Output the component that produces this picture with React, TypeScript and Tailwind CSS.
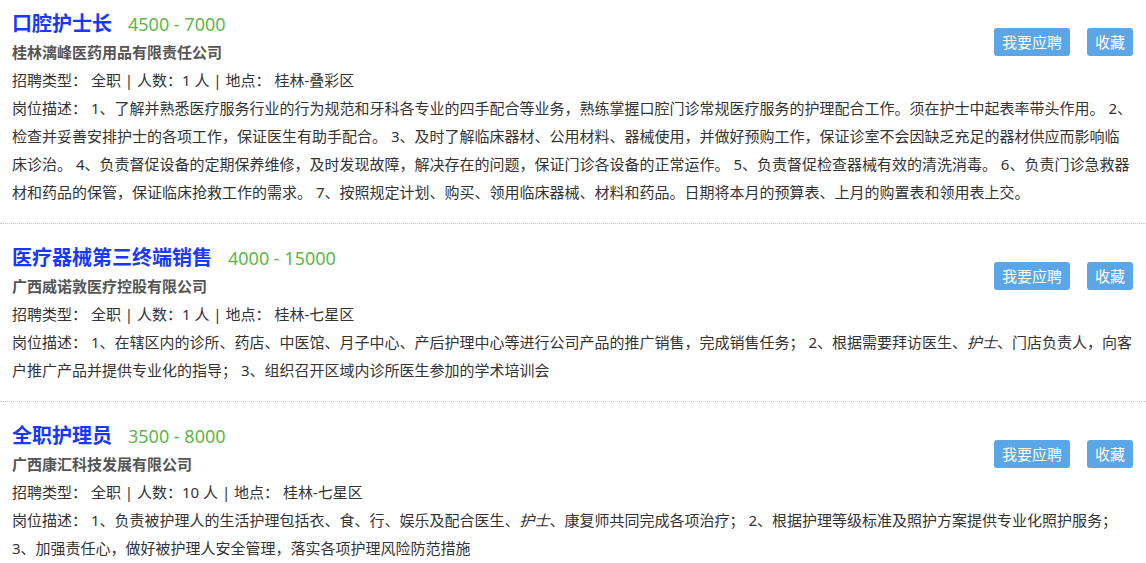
import React from 'react';

type Job = {
  title: string;
  salary: string;
  company: string;
  count: string;
  location: string;
  desc: React.ReactNode;
};

const jobs: Job[] = [
  {
    title: '口腔护士长',
    salary: '4500 - 7000',
    company: '桂林漓峰医药用品有限责任公司',
    count: '1',
    location: '桂林-叠彩区',
    desc: (
      <>
        1、了解并熟悉医疗服务行业的行为规范和牙科各专业的四手配合等业务，熟练掌握口腔门诊常规医疗服务的护理配合工作。须在护士中起表率带头作用。 2、检查并妥善安排护士的各项工作，保证医生有助手配合。 3、及时了解临床器材、公用材料、器械使用，并做好预购工作，保证诊室不会因缺乏充足的器材供应而影响临床诊治。 4、负责督促设备的定期保养维修，及时发现故障，解决存在的问题，保证门诊各设备的正常运作。 5、负责督促检查器械有效的清洗消毒。 6、负责门诊急救器材和药品的保管，保证临床抢救工作的需求。 7、按照规定计划、购买、领用临床器械、材料和药品。日期将本月的预算表、上月的购置表和领用表上交。
      </>
    ),
  },
  {
    title: '医疗器械第三终端销售',
    salary: '4000 - 15000',
    company: '广西威诺敦医疗控股有限公司',
    count: '1',
    location: '桂林-七星区',
    desc: (
      <>
        1、在辖区内的诊所、药店、中医馆、月子中心、产后护理中心等进行公司产品的推广销售，完成销售任务； 2、根据需要拜访医生、<em>护士</em>、门店负责人，向客户推广产品并提供专业化的指导； 3、组织召开区域内诊所医生参加的学术培训会
      </>
    ),
  },
  {
    title: '全职护理员',
    salary: '3500 - 8000',
    company: '广西康汇科技发展有限公司',
    count: '10',
    location: '桂林-七星区',
    desc: (
      <>
        1、负责被护理人的生活护理包括衣、食、行、娱乐及配合医生、<em>护士</em>、康复师共同完成各项治疗； 2、根据护理等级标准及照护方案提供专业化照护服务； 3、加强责任心，做好被护理人安全管理，落实各项护理风险防范措施
      </>
    ),
  },
];

function JobItem({ job, first }: { job: Job; first: boolean }) {
  return (
    <div
      className={`${first ? 'pt-[10px]' : 'pt-5'} pb-[17px] px-3 border-b border-dotted border-[#c8c8c8] flow-root`}
    >
      <div className="float-right mt-[18px] flex gap-[17px] mr-[1px]">
        <button className="h-7 px-2 rounded-[3px] bg-[#5aa6e6] text-white text-[15px] leading-7">
          我要应聘
        </button>
        <button className="h-7 px-2 rounded-[3px] bg-[#5aa6e6] text-white text-[15px] leading-7">
          收藏
        </button>
      </div>
      <div className="flex items-baseline gap-4 leading-7">
        <span className="text-[20px] font-bold text-[#1638ff]">{job.title}</span>
        <span className="text-[18px] text-[#5cb84a]">{job.salary}</span>
      </div>
      <div className="text-[15px] leading-7 font-bold text-[#555]">{job.company}</div>
      <div className="text-[15px] leading-7 text-[#333]">
        招聘类型： 全职 | 人数：{job.count} 人 | 地点： {job.location}
      </div>
      <div className="text-[15px] leading-7 text-[#333]">岗位描述： {job.desc}</div>
    </div>
  );
}

export default function App() {
  return (
    <div
      className="w-[1146px] bg-white"
      style={{ fontFamily: '"Noto Sans", "Noto Sans CJK SC", sans-serif' }}
    >
      {jobs.map((job, i) => (
        <JobItem key={job.title} job={job} first={i === 0} />
      ))}
    </div>
  );
}
